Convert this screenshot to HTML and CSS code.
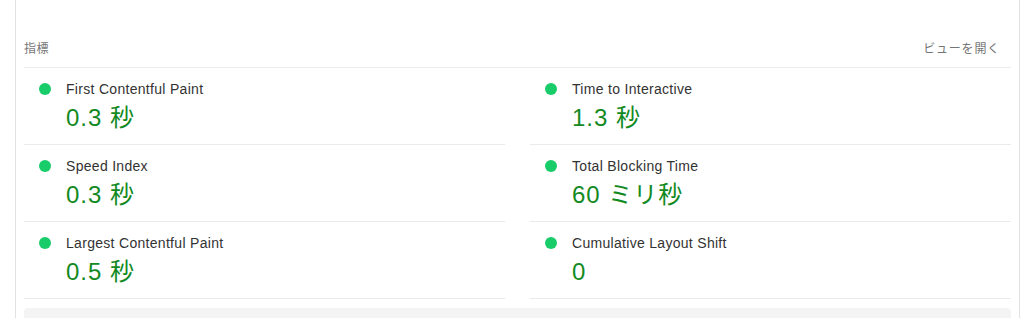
FILE: index.html
```html
<!DOCTYPE html>
<html lang="ja">
<head>
<meta charset="utf-8">
<title>指標</title>
<link rel="stylesheet" href="styles.css">
</head>
<body>
<div class="card">
  <div class="header">
    <span class="header-title">指標</span>
    <span class="header-toggle">ビューを開く</span>
  </div>
  <div class="metrics">
    <div class="metric">
      <div class="metric-title"><span class="dot"></span>First Contentful Paint</div>
      <div class="metric-value">0.3 秒</div>
    </div>
    <div class="metric">
      <div class="metric-title"><span class="dot"></span>Time to Interactive</div>
      <div class="metric-value">1.3 秒</div>
    </div>
    <div class="metric">
      <div class="metric-title"><span class="dot"></span>Speed Index</div>
      <div class="metric-value">0.3 秒</div>
    </div>
    <div class="metric">
      <div class="metric-title"><span class="dot"></span>Total Blocking Time</div>
      <div class="metric-value">60 ミリ秒</div>
    </div>
    <div class="metric">
      <div class="metric-title"><span class="dot"></span>Largest Contentful Paint</div>
      <div class="metric-value">0.5 秒</div>
    </div>
    <div class="metric">
      <div class="metric-title"><span class="dot"></span>Cumulative Layout Shift</div>
      <div class="metric-value">0</div>
    </div>
  </div>
  <div class="footer-box"></div>
</div>
</body>
</html>
```

FILE: styles.css
```css
* { box-sizing: border-box; }
html, body { margin: 0; padding: 0; background: #ffffff; }
body {
  font-family: "Liberation Sans", Arial, "Noto Sans CJK JP", sans-serif;
  overflow: hidden;
  height: 318px;
}
.card {
  margin-left: 15px;
  width: 1005px;
  height: 318px;
  border-left: 1px solid #e2e2e2;
  border-right: 1px solid #e2e2e2;
  padding: 0 8px;
}
.header {
  display: flex;
  justify-content: space-between;
  align-items: center;
  padding: 40px 11px 11px 0;
  border-bottom: 1px solid #ebebeb;
  font-size: 12px;
  line-height: 16px;
  color: #757575;
  font-family: "Noto Sans CJK JP", "Liberation Sans", sans-serif;
}
.header-title { letter-spacing: 0.5px; }
.header-toggle { letter-spacing: 0.8px; }
.metrics {
  display: grid;
  grid-template-columns: 481px 481px;
  column-gap: 25px;
}
.metric {
  height: 77px;
  border-bottom: 1px solid #ebebeb;
  padding: 11px 0 0 15px;
}
.metric-title {
  display: flex;
  align-items: center;
  font-size: 14px;
  line-height: 20px;
  letter-spacing: 0.3px;
  color: #333333;
}
.dot {
  width: 12px;
  height: 12px;
  border-radius: 50%;
  background: #18cc6a;
  margin-right: 15px;
  flex: none;
}
.metric-value {
  margin: 4px 0 0 27px;
  font-size: 24px;
  line-height: 30px;
  letter-spacing: 1px;
  color: #138a1f;
  font-family: "Liberation Sans", Arial, "Noto Sans CJK JP", sans-serif;
}
.footer-box {
  margin-top: 9px;
  height: 20px;
  background: #f4f4f4;
  border-radius: 4px;
}
```
